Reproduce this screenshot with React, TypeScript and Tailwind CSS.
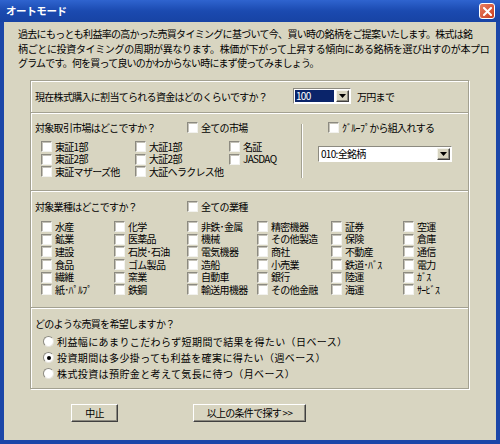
import React from "react";

const FONT = "font-['Noto_Sans_CJK_JP','Noto_Sans_CJK_SC',sans-serif]";

function Cb({ label }: { label: string }) {
  return (
    <div className="flex items-center h-[12.6px] whitespace-nowrap">
      <span className="w-[11px] h-[11px] shrink-0 bg-white border border-t-[#8c8a80] border-l-[#8c8a80] border-r-[#f2f2ee] border-b-[#f2f2ee] shadow-[inset_1px_1px_0_#c4c2b8]" />
      <span className="block ml-[3px] leading-[12px] h-[12px]">{label}</span>
    </div>
  );
}

function Radio({ label, on }: { label: string; on?: boolean }) {
  return (
    <div className="flex items-center h-[16px] whitespace-nowrap">
      <span className="w-[11px] h-[11px] shrink-0 rounded-full bg-white border border-t-[#8c8a80] border-l-[#8c8a80] border-r-[#e6e4dc] border-b-[#e6e4dc] flex items-center justify-center">
        {on && <span className="w-[4px] h-[4px] rounded-full bg-black" />}
      </span>
      <span className="block ml-[3px] leading-[12px] h-[12px] tracking-[0.4px]">{label}</span>
    </div>
  );
}

function DropBtn() {
  return (
    <div className="w-[13px] h-full shrink-0 bg-[#d8d5c1] border border-t-[#f4f3ec] border-l-[#f4f3ec] border-r-[#404040] border-b-[#404040] shadow-[inset_-1px_-1px_0_#8c8a80] flex items-center justify-center">
      <svg width="7" height="4" viewBox="0 0 7 4">
        <path d="M0 0H7L3.5 4Z" fill="#000" />
      </svg>
    </div>
  );
}

function Combo({ text, w, selected }: { text: string; w: string; selected?: boolean }) {
  return (
    <div className={`${w} h-[16px] bg-white border border-t-[#8c8a80] border-l-[#8c8a80] border-r-white border-b-white flex items-stretch p-[1px]`}>
      <div
        className={
          selected
            ? "flex-1 mr-[2px] bg-[#0a246a] text-white leading-[12px] pl-[1px] whitespace-nowrap"
            : "flex-1 mr-[2px] text-black leading-[12px] pl-[1px] whitespace-nowrap"
        }
      >
        {text}
      </div>
      <DropBtn />
    </div>
  );
}

function Sep() {
  return <div className="h-[2px] border-t border-[#a3a191] bg-white" />;
}

function Btn({ label, w }: { label: string; w: string }) {
  return (
    <div className={`${w} h-[18px] bg-[#d8d5c1] border border-t-white border-l-white border-r-[#404040] border-b-[#404040] shadow-[inset_-1px_-1px_0_#8c8a80] flex items-center justify-center whitespace-nowrap`}>
      {label}
    </div>
  );
}

const industries: { w: string; items: string[] }[] = [
  { w: "w-[73px]", items: ["水産", "鉱業", "建設", "食品", "繊維", "紙･ﾊﾟﾙﾌﾟ"] },
  { w: "w-[73px]", items: ["化学", "医薬品", "石炭･石油", "ゴム製品", "窯業", "鉄鋼"] },
  { w: "w-[70px]", items: ["非鉄･金属", "機械", "電気機器", "造船", "自動車", "輸送用機器"] },
  { w: "w-[74px]", items: ["精密機器", "その他製造", "商社", "小売業", "銀行", "その他金融"] },
  { w: "w-[72px]", items: ["証券", "保険", "不動産", "鉄道･ﾊﾞｽ", "陸運", "海運"] },
  { w: "w-[50px]", items: ["空運", "倉庫", "通信", "電力", "ｶﾞｽ", "ｻｰﾋﾞｽ"] },
];

export default function App() {
  return (
    <div className={`w-[500px] h-[444px] bg-[#1b46a8] flex flex-col ${FONT} text-[10px] tracking-[-0.7px] text-black`}>
      {/* Title bar */}
      <div className="h-[22px] shrink-0 flex items-center justify-between pl-[6px] pr-[5px] bg-gradient-to-b from-[#2f64cf] via-[#1b4ab0] to-[#1743a4]">
        <span className="text-white font-bold text-[10.5px] tracking-[-0.4px]">オートモード</span>
        <div className="w-[16px] h-[16px] rounded-[3px] border border-white bg-gradient-to-br from-[#ea7e60] to-[#c83a1c] flex items-center justify-center">
          <svg width="9" height="9" viewBox="0 0 9 9">
            <path d="M1 1L8 8M8 1L1 8" stroke="#fff" strokeWidth="2" strokeLinecap="square" />
          </svg>
        </div>
      </div>

      {/* Body */}
      <div className="flex-1 mx-[4px] mb-[4px] bg-[#d8d5c1] flex flex-col">
        <div className="pl-[14px] pt-[5px] leading-[14.5px] whitespace-nowrap">
          <div>過去にもっとも利益率の高かった売買タイミングに基づいて今、買い時の銘柄をご提案いたします。株式は銘</div>
          <div className="tracking-[-0.35px]">柄ごとに投資タイミングの周期が異なります。株価が下がって上昇する傾向にある銘柄を選び出すのが本プロ</div>
          <div className="tracking-[-0.8px]">グラムです。何を買って良いのかわからない時にまず使ってみましょう。</div>
        </div>

        {/* Panel */}
        <div className="ml-[26px] mt-[9px] w-[439px] border border-[#a3a191] shadow-[inset_1px_1px_0_#fff,1px_1px_0_#fff] flex flex-col">
          {/* Section 1 */}
          <div className="h-[31px] flex items-center pl-[4px]">
            <span className="w-[258px] whitespace-nowrap">現在株式購入に割当てられる資金はどのくらいですか？</span>
            <Combo text="100" w="w-[58px]" selected />
            <span className="ml-[6px]">万円まで</span>
          </div>
          <Sep />

          {/* Section 2 */}
          <div className="h-[76px] flex">
            <div className="w-[270px] pt-[6px] pl-[4px]">
              <div className="h-[16px] flex items-center">
                <span className="w-[152px] whitespace-nowrap">対象取引市場はどこですか？</span>
                <Cb label="全ての市場" />
              </div>
              <div className="mt-[5px] pl-[6px] grid grid-cols-[94px_94px_auto]">
                <Cb label="東証1部" />
                <Cb label="大証1部" />
                <Cb label="名証" />
                <Cb label="東証2部" />
                <Cb label="大証2部" />
                <Cb label="JASDAQ" />
                <Cb label="東証マザーズ他" />
                <Cb label="大証ヘラクレス他" />
              </div>
            </div>
            <div className="mt-[10px] h-[54px] w-[2px] border-l border-[#a3a191] bg-white" />
            <div className="flex-1 pt-[6px]">
              <div className="h-[16px] flex items-center pl-[25px]">
                <Cb label="ｸﾞﾙｰﾌﾟから組入れする" />
              </div>
              <div className="mt-[10px] pl-[15px]">
                <Combo text="010:全銘柄" w="w-[134px]" />
              </div>
            </div>
          </div>
          <Sep />

          {/* Section 3 */}
          <div className="h-[115px] pt-[7px] pl-[4px]">
            <div className="h-[16px] flex items-center">
              <span className="w-[152px] whitespace-nowrap">対象業種はどこですか？</span>
              <Cb label="全ての業種" />
            </div>
            <div className="mt-[6px] pl-[6px] flex">
              {industries.map((col, i) => (
                <div key={i} className={`${col.w} flex flex-col`}>
                  {col.items.map((it) => (
                    <Cb key={it} label={it} />
                  ))}
                </div>
              ))}
            </div>
          </div>
          <Sep />

          {/* Section 4 */}
          <div className="h-[79px] pt-[7px] pl-[4px]">
            <div className="h-[16px] flex items-center">
              <span className="whitespace-nowrap">どのような売買を希望しますか？</span>
            </div>
            <div className="mt-[2px] pl-[8px] flex flex-col">
              <Radio label="利益幅にあまりこだわらず短期間で結果を得たい（日ベース）" />
              <Radio label="投資期間は多少掛っても利益を確実に得たい（週ベース）" on />
              <Radio label="株式投資は預貯金と考えて気長に待つ（月ベース）" />
            </div>
          </div>
        </div>

        {/* Buttons */}
        <div className="mt-[15px] pl-[67px] flex gap-[75px]">
          <Btn label="中止" w="w-[47px]" />
          <Btn label="以上の条件で探す >>" w="w-[113px]" />
        </div>
      </div>
    </div>
  );
}
